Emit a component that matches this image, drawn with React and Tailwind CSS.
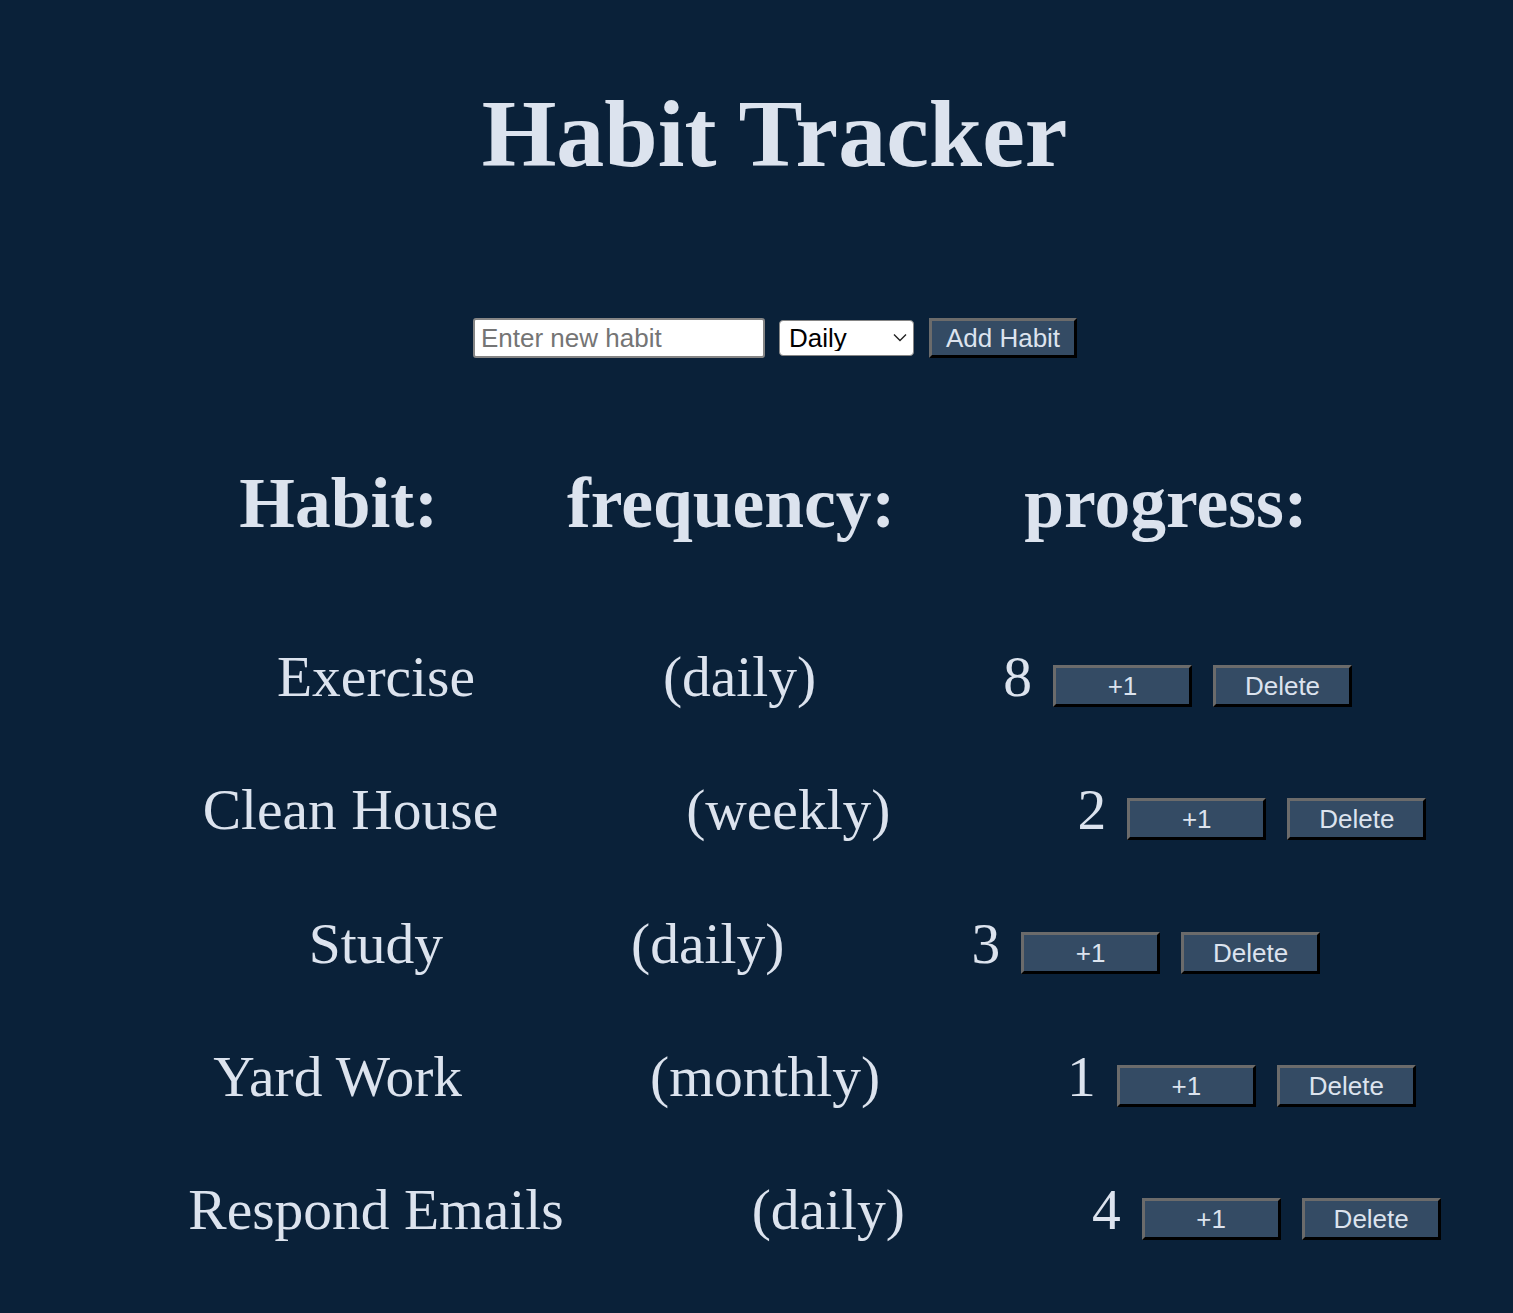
import { useState } from "react";

const serif = { fontFamily: '"Liberation Serif", "Times New Roman", serif' };

const initialHabits = [
  { id: 1, name: "Exercise", frequency: "daily", progress: 8 },
  { id: 2, name: "Clean House", frequency: "weekly", progress: 2 },
  { id: 3, name: "Study", frequency: "daily", progress: 3 },
  { id: 4, name: "Yard Work", frequency: "monthly", progress: 1 },
  { id: 5, name: "Respond Emails", frequency: "daily", progress: 4 },
];

// botão com borda "outset" igual ao padrão do navegador
const btn =
  "box-border border-[3px] border-solid border-t-[#6b6b6b] border-l-[#6b6b6b] border-r-black border-b-black bg-[#344b64] text-[#dce3ee] text-[26px] leading-none font-['Liberation_Sans',Arial,sans-serif]";

export default function App() {
  const [habits, setHabits] = useState(initialHabits);
  const [name, setName] = useState("");
  const [frequency, setFrequency] = useState("daily");

  const handleAdd = () => {
    if (!name.trim()) return;
    setHabits([...habits, { id: Date.now(), name: name.trim(), frequency, progress: 0 }]);
    setName("");
  };

  const handleIncrement = (id) => {
    setHabits(habits.map((h) => (h.id === id ? { ...h, progress: h.progress + 1 } : h)));
  };

  const handleDelete = (id) => {
    setHabits(habits.filter((h) => h.id !== id));
  };

  return (
    <div className="min-h-[1313px] w-full bg-[#0a2139] text-[#dce3ee] overflow-hidden">
      <h1
        className="pt-[86px] pl-[36px] text-center text-[96px] leading-[96px] font-bold"
        style={serif}
      >
        Habit Tracker
      </h1>

      <div className="mt-[136px] flex h-[40px] items-center justify-center pl-[37px] font-['Liberation_Sans',Arial,sans-serif]">
        <input
          value={name}
          onChange={(e) => setName(e.target.value)}
          placeholder="Enter new habit"
          className="box-border h-[40px] w-[292px] rounded-[3px] border-2 border-[#858585] bg-white px-[6px] text-[26px] text-black placeholder:text-[#757575] outline-none"
        />
        <div className="relative ml-[14px] h-[36px] w-[135px]">
          <select
            value={frequency}
            onChange={(e) => setFrequency(e.target.value)}
            className="box-border h-full w-full appearance-none rounded-[4px] border border-[#858585] bg-white pl-[9px] text-[26px] leading-none text-black outline-none"
          >
            <option value="daily">Daily</option>
            <option value="weekly">Weekly</option>
            <option value="monthly">Monthly</option>
          </select>
          <svg
            className="pointer-events-none absolute right-[7px] top-[13px]"
            width="14"
            height="9"
            viewBox="0 0 14 9"
            fill="none"
          >
            <path d="M1 1.5 L7 7.5 L13 1.5" stroke="#222" strokeWidth="1.4" />
          </svg>
        </div>
        <button onClick={handleAdd} className={`${btn} ml-[15px] h-[40px] w-[148px]`}>
          Add Habit
        </button>
      </div>

      <div
        className="mt-[109px] flex h-[71px] items-start justify-center pl-[34px] text-[71.5px] leading-[71px] font-bold"
        style={serif}
      >
        <span>Habit:</span>
        <span className="ml-[129px]">frequency:</span>
        <span className="ml-[129px]">progress:</span>
      </div>

      <ul className="mt-[110px]">
        {habits.map((habit) => (
          <li
            key={habit.id}
            className="flex h-[133.25px] items-start justify-center pl-[116px]"
          >
            <span className="text-[57.5px] leading-[57.5px] whitespace-nowrap" style={serif}>
              {habit.name}
            </span>
            <span className="ml-[188px] text-[57.5px] leading-[57.5px] whitespace-nowrap" style={serif}>
              ({habit.frequency})
            </span>
            <span className="ml-[187px] text-[57.5px] leading-[57.5px]" style={serif}>
              {habit.progress}
            </span>
            <button
              onClick={() => handleIncrement(habit.id)}
              className={`${btn} ml-[21px] mt-[17px] h-[42px] w-[139px]`}
            >
              +1
            </button>
            <button
              onClick={() => handleDelete(habit.id)}
              className={`${btn} ml-[21px] mt-[17px] h-[42px] w-[139px]`}
            >
              Delete
            </button>
          </li>
        ))}
      </ul>
    </div>
  );
}
